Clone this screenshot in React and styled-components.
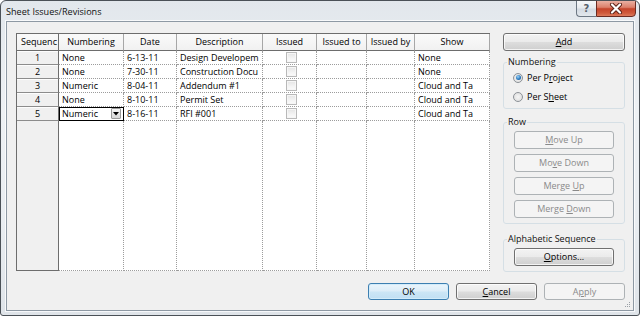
import React from "react";
import styled, { createGlobalStyle, css } from "styled-components";

const Global = createGlobalStyle`
  html, body { margin: 0; padding: 0; background: #fff; }
  body {
    width: 640px; height: 316px; overflow: hidden;
    font-family: "Open Sans", "Noto Sans", sans-serif;
    font-size: 9px; color: #000;
  }
  * { box-sizing: border-box; }
`;

const Window = styled.div`
  position: relative;
  width: 640px;
  height: 316px;
  display: flex;
  flex-direction: column;
  border: 1px solid #4b5157;
  border-radius: 6px 6px 3px 3px;
  background: linear-gradient(180deg, #e2e7ec 0%, #eef1f4 35%, #e9edf1 70%, #dfe4e9 100%);
  overflow: hidden;
`;

const TitleBar = styled.div`
  height: 20px;
  flex: none;
  display: flex;
  justify-content: space-between;
  align-items: flex-start;
`;

const Title = styled.div`
  padding: 4px 0 0 5px;
  font-size: 9.1px;
  line-height: 14px;
  color: #111;
`;

const Caption = styled.div`
  display: flex;
  margin-top: -1px;
  margin-right: 3px;
`;

const HelpButton = styled.div`
  width: 20px;
  height: 17px;
  border: 1px solid #6c7783;
  border-right: none;
  border-radius: 0 0 0 4px;
  background: linear-gradient(180deg, #f6f8fa 0%, #e6eaee 48%, #d3dae2 52%, #e2e7ec 100%);
  display: flex;
  align-items: center;
  justify-content: center;
  font-family: "DejaVu Sans", sans-serif;
  font-size: 10px;
  font-weight: bold;
  color: #56606b;
`;

const CloseButton = styled.div`
  width: 40px;
  height: 17px;
  border: 1px solid #6a2b22;
  border-radius: 0 0 4px 0;
  background: linear-gradient(180deg, #eab0a2 0%, #dc806b 42%, #c5442b 52%, #cf5a3c 80%, #dc7a5c 100%);
  display: flex;
  align-items: center;
  justify-content: center;
`;

const Client = styled.div`
  position: relative;
  flex: 1;
  margin: 0 5px 4px 5px;
  border: 1px solid #8e99a4;
  box-shadow: 0 0 0 1px rgba(255, 255, 255, 0.75);
  background: #f0f0f0;
  padding: 11px 8px 10px 9px;
  display: flex;
  flex-direction: column;
`;

const Main = styled.div`
  display: flex;
  gap: 13px;
  height: 239px;
`;

const Table = styled.div`
  display: grid;
  grid-template-columns: 42px 65px 53px 86px 54px 50px 48px 75px;
  grid-template-rows: 17px repeat(5, 14px) 1fr;
  width: 474px;
  height: 238px;
  border-top: 1px solid #6d6d6d;
  border-left: 1px solid #6d6d6d;
  background: #fff;
`;

const HeadCell = styled.div`
  background: linear-gradient(180deg, #fafafa 0%, #f1f1f1 100%);
  border-right: 1px solid ${(p) => (p.$first ? "#6d6d6d" : "#a7a7a7")};
  border-bottom: 1px solid #6d6d6d;
  text-align: center;
  white-space: nowrap;
  overflow: hidden;
  line-height: 16px;
  padding: ${(p) => (p.$first ? "0 0 0 3px" : "0 2px")};
`;

const RowHead = styled.div`
  background: #f0f0f0;
  border-right: 1px solid #6d6d6d;
  border-bottom: 1px solid #8c8c8c;
  box-shadow: inset 0 1px 0 #fdfdfd;
  text-align: center;
  line-height: 13px;
`;

const Cell = styled.div`
  border-right: 1px dotted #9c9c9c;
  border-bottom: 1px dotted #9c9c9c;
  padding-left: 3px;
  line-height: 13px;
  white-space: nowrap;
  overflow: hidden;
  display: flex;
  align-items: center;
  justify-content: ${(p) => (p.$center ? "center" : "flex-start")};
  ${(p) =>
    p.$selected &&
    css`
      outline: 1px solid #000;
      outline-offset: -1px;
      justify-content: space-between;
      padding-right: 2px;
    `}
`;

const FillHead = styled.div`
  background: #f0f0f0;
  border-right: 1px solid #6d6d6d;
  border-bottom: 1px solid #6d6d6d;
`;

const FillCell = styled.div`
  border-right: 1px dotted #9c9c9c;
  border-bottom: 1px dotted #9c9c9c;
`;

const Check = styled.span`
  width: 11px;
  height: 11px;
  border: 1px solid #b9b9b9;
  background: linear-gradient(180deg, #e4e4e4 0%, #f4f4f4 60%, #fbfbfb 100%);
  box-shadow: inset 0 0 0 1px #f6f6f6;
`;

const DropButton = styled.span`
  width: 10px;
  height: 11px;
  border: 1px solid #9a9a9a;
  border-radius: 1px;
  background: linear-gradient(180deg, #f7f7f7 0%, #e6e6e6 50%, #d6d6d6 100%);
  display: flex;
  align-items: center;
  justify-content: center;
`;

const Side = styled.div`
  width: 122px;
  display: flex;
  flex-direction: column;
`;

const Button = styled.button`
  width: ${(p) => (p.$w ? `${p.$w}px` : "100%")};
  height: ${(p) => (p.$h ? `${p.$h}px` : "18px")};
  flex: none;
  margin: 0;
  padding: 0;
  font: inherit;
  color: #000;
  line-height: 14px;
  border: 1px solid #707070;
  border-radius: 3px;
  background: linear-gradient(180deg, #f3f3f3 0%, #ebebeb 48%, #dddddd 52%, #cfcfcf 100%);
  box-shadow: inset 0 0 0 1px rgba(255, 255, 255, 0.75);
  display: flex;
  align-items: center;
  justify-content: center;
  u { text-underline-offset: 1px; }
  ${(p) =>
    p.disabled &&
    css`
      color: #8a8a8a;
      border-color: #adb2b5;
      background: #f4f4f4;
      box-shadow: none;
    `}
  ${(p) =>
    p.$default &&
    css`
      border-color: #3c7fb1;
      background: linear-gradient(180deg, #eaf5fc 0%, #dcedf8 48%, #cce6f6 52%, #c0dff3 100%);
      box-shadow: inset 0 0 0 1px #d3ecfa;
    `}
`;

const Group = styled.fieldset`
  display: block;
  margin: ${(p) => p.$mt}px 0 0 0;
  padding: ${(p) => p.$pt}px 10px ${(p) => p.$pb}px 10px;
  border: 1px solid #d5dfe5;
  border-radius: 3px;
  min-width: 0;
`;

const Legend = styled.legend`
  padding: 0 1px;
  margin: 0 auto 0 -7px;
  line-height: 12px;
  color: #111;
  text-align: left;
`;

const Stack = styled.div`
  display: flex;
  flex-direction: column;
  gap: ${(p) => p.$gap}px;
`;

const RadioRow = styled.label`
  height: 19px;
  margin-left: -1px;
  display: flex;
  align-items: center;
  gap: 4px;
`;

const RadioDot = styled.span`
  position: relative;
  width: 10px;
  height: 10px;
  border-radius: 50%;
  border: 1px solid #8c9197;
  background: radial-gradient(circle at 50% 50%, #f5f5f5 0%, #dadada 100%);
  ${(p) =>
    p.$checked &&
    css`
      &::after {
        content: "";
        position: absolute;
        inset: 1.5px;
        border-radius: 50%;
        background: radial-gradient(circle at 40% 35%, #9fd3f7 0%, #2b7bc0 55%, #154d86 100%);
      }
    `}
`;

const Footer = styled.div`
  margin-top: 11px;
  display: flex;
  justify-content: flex-end;
  gap: 7px;
`;

const Grip = styled.svg`
  position: absolute;
  right: 2px;
  bottom: 2px;
`;

const headers = ["Numbering", "Date", "Description", "Issued", "Issued to", "Issued by", "Show"];

const rows = [
  { n: "1", num: "None", date: "6-13-11", desc: "Design Developem", show: "None" },
  { n: "2", num: "None", date: "7-30-11", desc: "Construction Docu", show: "None" },
  { n: "3", num: "Numeric", date: "8-04-11", desc: "Addendum #1", show: "Cloud and Ta" },
  { n: "4", num: "None", date: "8-10-11", desc: "Permit Set", show: "Cloud and Ta" },
  { n: "5", num: "Numeric", date: "8-16-11", desc: "RFI #001", show: "Cloud and Ta", selected: true },
];

export default function App() {
  return (
    <>
      <Global />
      <Window>
        <TitleBar>
          <Title>Sheet Issues/Revisions</Title>
          <Caption>
            <HelpButton>?</HelpButton>
            <CloseButton>
              <svg width="14" height="11" viewBox="0 0 14 11">
                <path d="M3 1.5 L11 9.5 M11 1.5 L3 9.5" stroke="#5a2016" strokeWidth="4" strokeLinecap="round" />
                <path d="M3 1.5 L11 9.5 M11 1.5 L3 9.5" stroke="#ffffff" strokeWidth="2.2" strokeLinecap="round" />
              </svg>
            </CloseButton>
          </Caption>
        </TitleBar>
        <Client>
          <Main>
            <Table>
              <HeadCell $first>Sequenc</HeadCell>
              {headers.map((h) => (
                <HeadCell key={h}>{h}</HeadCell>
              ))}
              {rows.map((r) => (
                <React.Fragment key={r.n}>
                  <RowHead>{r.n}</RowHead>
                  <Cell $selected={r.selected}>
                    {r.num}
                    {r.selected && (
                      <DropButton>
                        <svg width="6" height="4" viewBox="0 0 6 4">
                          <path d="M0 0 H6 L3 3.5 Z" fill="#000" />
                        </svg>
                      </DropButton>
                    )}
                  </Cell>
                  <Cell>{r.date}</Cell>
                  <Cell>{r.desc}</Cell>
                  <Cell $center>
                    <Check />
                  </Cell>
                  <Cell />
                  <Cell />
                  <Cell>{r.show}</Cell>
                </React.Fragment>
              ))}
              <FillHead />
              {headers.map((h) => (
                <FillCell key={h} />
              ))}
            </Table>
            <Side>
              <Button>
                <span><u>A</u>dd</span>
              </Button>
              <Group $mt={5} $pt={0} $pb={2}>
                <Legend>Numbering</Legend>
                <Stack $gap={0}>
                  <RadioRow>
                    <RadioDot $checked />
                    <span>Per P<u>r</u>oject</span>
                  </RadioRow>
                  <RadioRow>
                    <RadioDot />
                    <span>Per S<u>h</u>eet</span>
                  </RadioRow>
                </Stack>
              </Group>
              <Group $mt={7} $pt={3} $pb={5}>
                <Legend>Row</Legend>
                <Stack $gap={5}>
                  <Button disabled><span><u>M</u>ove Up</span></Button>
                  <Button disabled><span>Mo<u>v</u>e Down</span></Button>
                  <Button disabled><span>Merge <u>U</u>p</span></Button>
                  <Button disabled><span>Merge <u>D</u>own</span></Button>
                </Stack>
              </Group>
              <Group $mt={9} $pt={3} $pb={5}>
                <Legend>Alphabetic Sequence</Legend>
                <Stack $gap={0}>
                  <Button><span><u>O</u>ptions...</span></Button>
                </Stack>
              </Group>
            </Side>
          </Main>
          <Footer>
            <Button $w={81} $h={17} $default>OK</Button>
            <Button $w={81} $h={17}><span><u>C</u>ancel</span></Button>
            <Button $w={81} $h={17} disabled><span>A<u>p</u>ply</span></Button>
          </Footer>
          <Grip width="8" height="8" viewBox="0 0 8 8">
            <rect x="6" y="2" width="1" height="1" fill="#9aa0a6" />
            <rect x="6" y="4" width="1" height="1" fill="#9aa0a6" />
            <rect x="4" y="4" width="1" height="1" fill="#9aa0a6" />
            <rect x="6" y="6" width="1" height="1" fill="#9aa0a6" />
            <rect x="4" y="6" width="1" height="1" fill="#9aa0a6" />
            <rect x="2" y="6" width="1" height="1" fill="#9aa0a6" />
          </Grip>
        </Client>
      </Window>
    </>
  );
}
